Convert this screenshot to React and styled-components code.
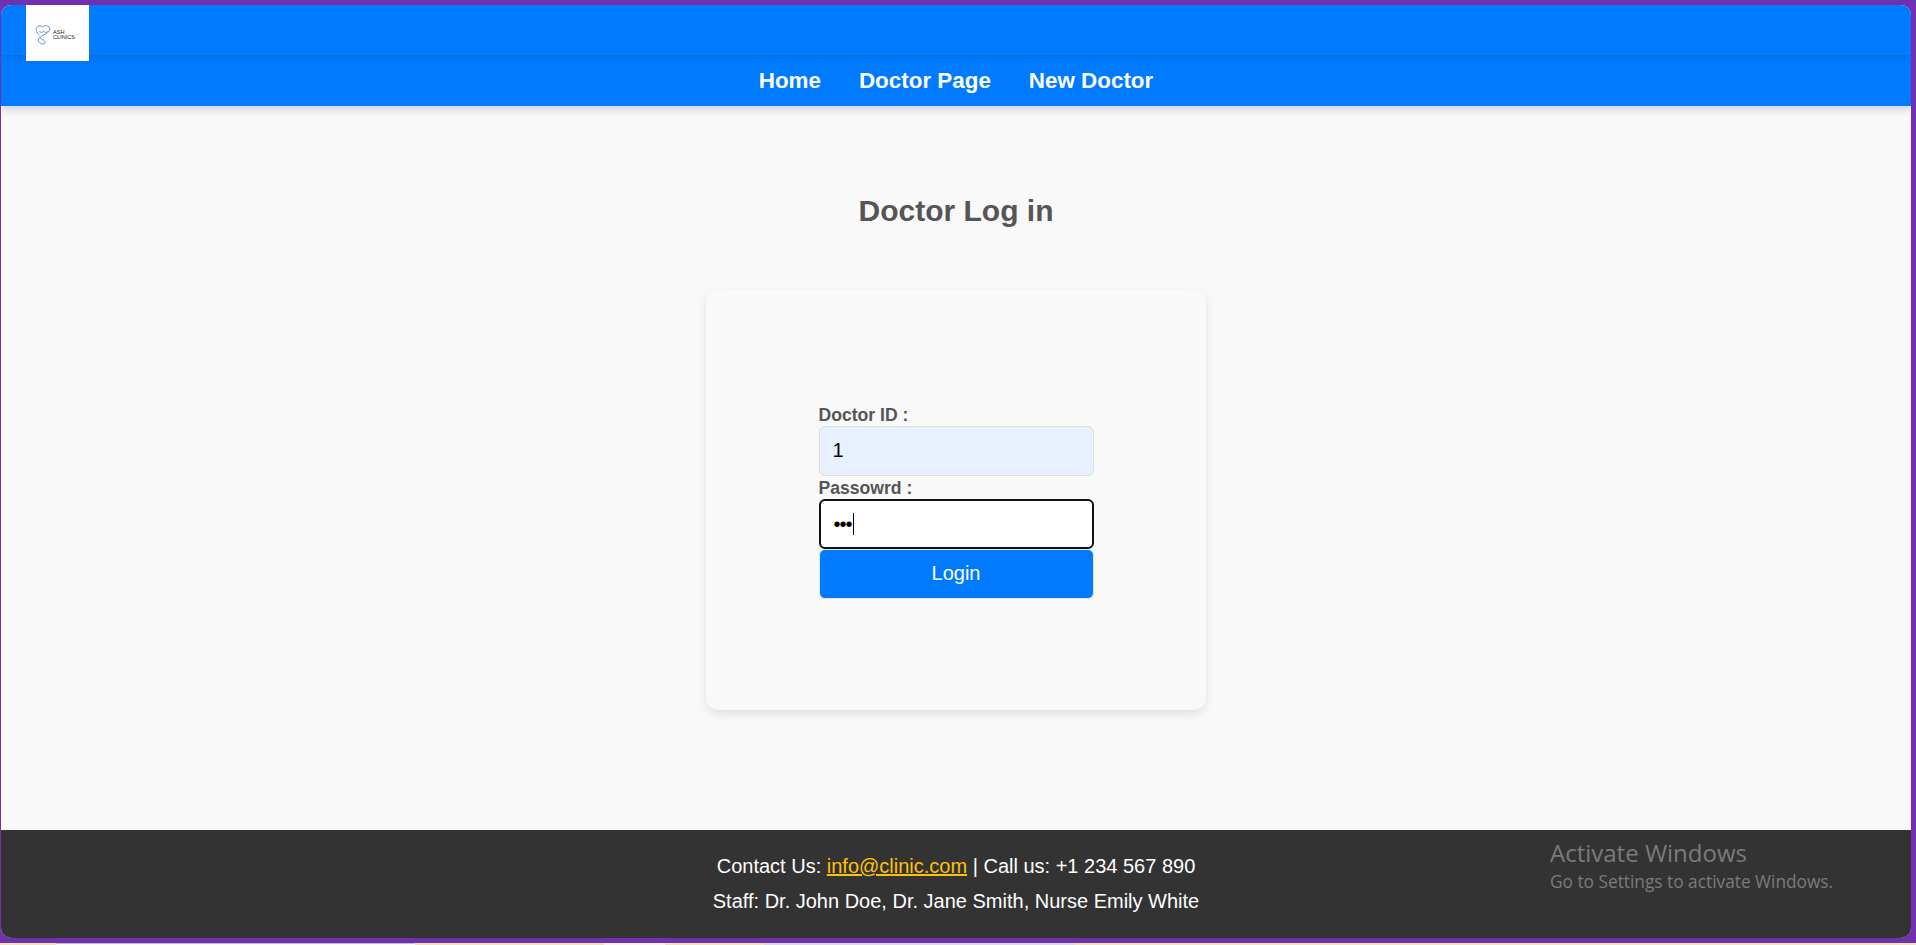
import React from "react";
import styled, { createGlobalStyle } from "styled-components";

const Global = createGlobalStyle`
  html, body { margin: 0; padding: 0; height: 100%; overflow: hidden; }
  body { font-family: "Liberation Sans", Arial, sans-serif; background: #7030b0; }
  #root { height: 100%; }
  * { box-sizing: border-box; }
`;

const Screen = styled.div`
  height: 945px;
  display: flex;
  flex-direction: column;
  background: #7030b0;
`;

const Frame = styled.div`
  height: 933px;
  margin: 5px 5px 0 1px;
  display: flex;
  flex-direction: column;
  border-radius: 10px;
  overflow: hidden;
  background: #f9f9f9;
  position: relative;
`;

const TaskStrip = styled.div`
  margin-top: 5px;
  flex: 1;
  display: flex;
`;

const StripPart = styled.div`
  width: ${(p) => p.$w};
  flex: ${(p) => (p.$grow ? 1 : "none")};
  background: ${(p) => p.$bg};
  border-top: 1px solid ${(p) => p.$line || p.$bg};
`;

const Header = styled.header`
  background: #007bff;
  height: 101px;
  display: flex;
  flex-direction: column;
  box-shadow: 0 4px 8px rgba(0, 0, 0, 0.15);
  position: relative;
  z-index: 2;
`;

const TopBar = styled.div`
  height: 50px;
  box-shadow: 0 4px 6px rgba(0, 0, 0, 0.09);
  position: relative;
`;

const LogoBox = styled.div`
  position: absolute;
  left: 25px;
  top: 0;
  width: 63px;
  height: 56px;
  background: #fff;
  display: flex;
  align-items: center;
  padding: 4px 0 0 9px;
  gap: 2px;
  z-index: 1;
`;

const LogoText = styled.div`
  font-size: 5.6px;
  line-height: 5.5px;
  color: #222;
`;

const Nav = styled.nav`
  flex: 1;
  display: flex;
  justify-content: center;
  align-items: center;
  gap: 38px;
  padding-top: 1px;
`;

const NavLink = styled.a`
  color: #fff;
  font-size: 22.4px;
  font-weight: 700;
  text-decoration: none;
`;

const Main = styled.main`
  flex: 1;
  display: flex;
  flex-direction: column;
  align-items: center;
`;

const Title = styled.h2`
  margin: 88px 0 0;
  font-size: 30px;
  line-height: 34px;
  font-weight: 700;
  color: #555;
`;

const Card = styled.section`
  margin-top: 62px;
  width: 500px;
  height: 420px;
  background: #f9f9f9;
  border-radius: 12px;
  box-shadow: 0 4px 10px rgba(0, 0, 0, 0.1);
  display: flex;
  justify-content: center;
  padding-top: 113px;
`;

const Form = styled.form`
  width: 275px;
  display: flex;
  flex-direction: column;
`;

const Label = styled.label`
  font-size: 17.6px;
  line-height: 25px;
  font-weight: 700;
  color: #555;
  height: 23px;
`;

const Field = styled.div`
  height: 50px;
  border-radius: 6px;
  padding: 0 13px;
  display: flex;
  align-items: center;
  font-size: 20px;
  color: #000;
  background: ${(p) => (p.$focus ? "#fff" : "#e8f0fe")};
  border: ${(p) => (p.$focus ? "2px solid #101010" : "1px solid #ddd")};
  padding-bottom: ${(p) => (p.$focus ? "0" : "2px")};
`;

const Dots = styled.span`
  font-size: 20px;
  letter-spacing: -1px;
  line-height: 1;
`;

const Caret = styled.span`
  width: 1px;
  height: 22px;
  background: #000;
  margin-left: 1px;
`;

const Submit = styled.button`
  height: 50px;
  border: 1px solid #e6e6e6;
  border-radius: 6px;
  background: #007bff;
  color: #fff;
  font-family: inherit;
  font-size: 20px;
  padding: 0 0 2px;
`;

const Footer = styled.footer`
  height: 108px;
  background: #333;
  color: #fff;
  text-align: center;
  font-size: 20px;
  padding-top: 19px;
`;

const FooterLine = styled.p`
  margin: 0;
  height: 35px;
  line-height: 35px;
`;

const Mail = styled.a`
  color: #ffc107;
  text-decoration: underline;
`;

const Watermark = styled.div`
  position: absolute;
  left: 1549px;
  top: 831px;
  color: #7b7b7b;
  font-family: "Open Sans", sans-serif;
  pointer-events: none;
`;

const WatermarkTitle = styled.div`
  font-size: 24px;
  line-height: 34px;
`;

const WatermarkNote = styled.div`
  font-size: 17.3px;
  line-height: 24px;
`;

const LogoMark = () => (
  <svg width="16" height="20" viewBox="0 0 15 20" fill="none" stroke="#4f85d2" strokeWidth="0.9">
    <path d="M4 10C1 8 0 5 1 3C2 1 5 0 7 2C9 0 13 0 14 3C15 6 12 8 10 9C8 10 4 12 3 14C2 17 5 19 8 19C10 19 10 16 8 15C6 14 5 13 4 12" />
    <path d="M4 6C5 8 7 8 8 6C9 8 11 8 12 6" />
  </svg>
);

export default function App() {
  return (
    <Screen>
      <Global />
      <Frame>
        <Header>
          <TopBar>
            <LogoBox>
              <LogoMark />
              <LogoText>
                ASH
                <br />
                CLINICS
              </LogoText>
            </LogoBox>
          </TopBar>
          <Nav>
            <NavLink href="#">Home</NavLink>
            <NavLink href="#">Doctor Page</NavLink>
            <NavLink href="#">New Doctor</NavLink>
          </Nav>
        </Header>
        <Main>
          <Title>Doctor Log in</Title>
          <Card>
            <Form>
              <Label>Doctor ID :</Label>
              <Field>1</Field>
              <Label>Passowrd :</Label>
              <Field $focus>
                <Dots>•••</Dots>
                <Caret />
              </Field>
              <Submit type="button">Login</Submit>
            </Form>
          </Card>
        </Main>
        <Footer>
          <FooterLine>
            Contact Us: <Mail href="#">info@clinic.com</Mail> | Call us: +1 234 567 890
          </FooterLine>
          <FooterLine>Staff: Dr. John Doe, Dr. Jane Smith, Nurse Emily White</FooterLine>
        </Footer>
        <Watermark>
          <WatermarkTitle>Activate Windows</WatermarkTitle>
          <WatermarkNote>Go to Settings to activate Windows.</WatermarkNote>
        </Watermark>
      </Frame>
      <TaskStrip>
        <StripPart $w="56px" $bg="#eae6ae" />
        <StripPart $w="359px" $bg="#ffffff" $line="#c0c0c0" />
        <StripPart $w="189px" $bg="#eae6ae" />
        <StripPart $w="61px" $bg="#fbf4e0" />
        <StripPart $w="99px" $bg="#eae6ae" />
        <StripPart $w="311px" $bg="#d8dcd8" />
        <StripPart $grow $bg="#eae6ae" />
      </TaskStrip>
    </Screen>
  );
}
